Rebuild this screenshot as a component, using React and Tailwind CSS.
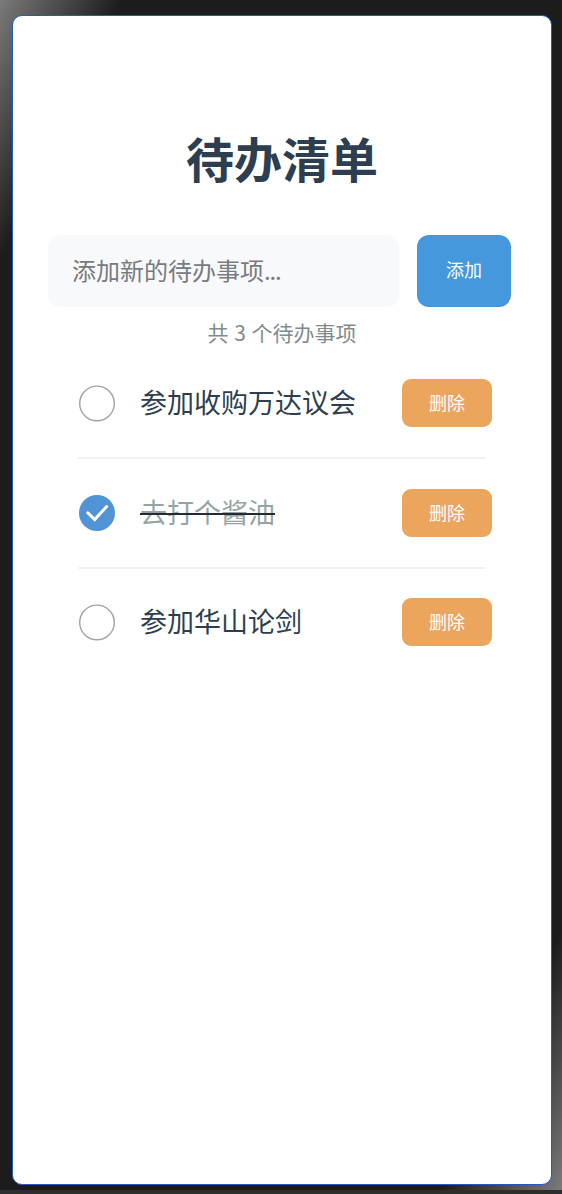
const items = [
  { id: 1, text: '参加收购万达议会', done: false },
  { id: 2, text: '去打个酱油', done: true },
  { id: 3, text: '参加华山论剑', done: false },
];

function Check({ done }) {
  return (
    <svg width="36" height="36" viewBox="0 0 36 36" className="shrink-0 overflow-visible">
      {done ? (
        <>
          <circle cx="18" cy="18" r="18" fill="#5094d5" />
          <path d="M8.8 17.8 L15.7 24.6 L27.7 11.5" fill="none" stroke="#fff" strokeWidth="3" strokeLinecap="round" strokeLinejoin="miter" />
        </>
      ) : (
        <circle cx="18" cy="18.4" r="17.3" fill="#fff" stroke="#a3a3a6" strokeWidth="1.4" />
      )}
    </svg>
  );
}

function TodoRow({ item, last }) {
  return (
    <li className="flex h-[109.5px] flex-col">
      <div className="flex h-12 items-center pl-[31px]">
        <Check done={item.done} />
        <div className="ml-[25px] h-12 flex-1">
          <span
            className={
              item.done
                ? 'relative inline-block text-[27px] leading-[46px] text-[#95a5a6]'
                : 'inline-block text-[27px] leading-[46px] text-[#2c3e50]'
            }
          >
            {item.text}
            {item.done && <span className="absolute inset-x-0 top-[24px] h-[2px] bg-[#262a2e]" />}
          </span>
        </div>
        <button className="mr-[19px] h-12 w-[90px] rounded-[9px] bg-[#eca55d] pb-[2px] text-[18px] leading-none text-white">
          删除
        </button>
      </div>
      {!last && <div className="ml-[30px] mr-[25px] mt-[30px] h-[2px] bg-[#f1f2f3]" />}
    </li>
  );
}

export default function App() {
  return (
    <div className="flex h-[1194px] w-[562px] flex-col bg-[#2d2d32] font-['Noto_Sans_CJK_SC',sans-serif]">
      <div className="h-[1190px] bg-[linear-gradient(to_bottom_right,#7a7a7a,#1c1c1c_11%,#1c1c1c_89%,#7a7a7a)] pl-3 pt-[15px]">
        <main className="flex h-[1170px] w-[540px] flex-col rounded-[10px] border border-[#2259c4] bg-white pl-[35px] pr-10 pt-[105px]">
          <h1 className="pl-[5px] text-center text-[48px] font-bold leading-[72px] text-[#2c3e50]">待办清单</h1>
          <div className="mt-[42px] flex gap-[18px]">
            <div className="flex h-[72px] w-[351px] items-center rounded-xl bg-[#f8f9fb] pb-[3px] pl-6 text-[24px] leading-none text-[#777b80]">
              添加新的待办事项<span className="tracking-[-1.2px]">...</span>
            </div>
            <button className="h-[72px] w-[94px] rounded-xl bg-[#4498db] pb-[4px] text-[18px] leading-none text-white">添加</button>
          </div>
          <p className="mt-[10px] pl-[5px] text-center text-[21px] leading-[30px] text-[#7f8c8d] [word-spacing:1px]">共 3 个待办事项</p>
          <ul className="mt-8">
            {items.map((item, i) => (
              <TodoRow key={item.id} item={item} last={i === items.length - 1} />
            ))}
          </ul>
        </main>
      </div>
    </div>
  );
}
